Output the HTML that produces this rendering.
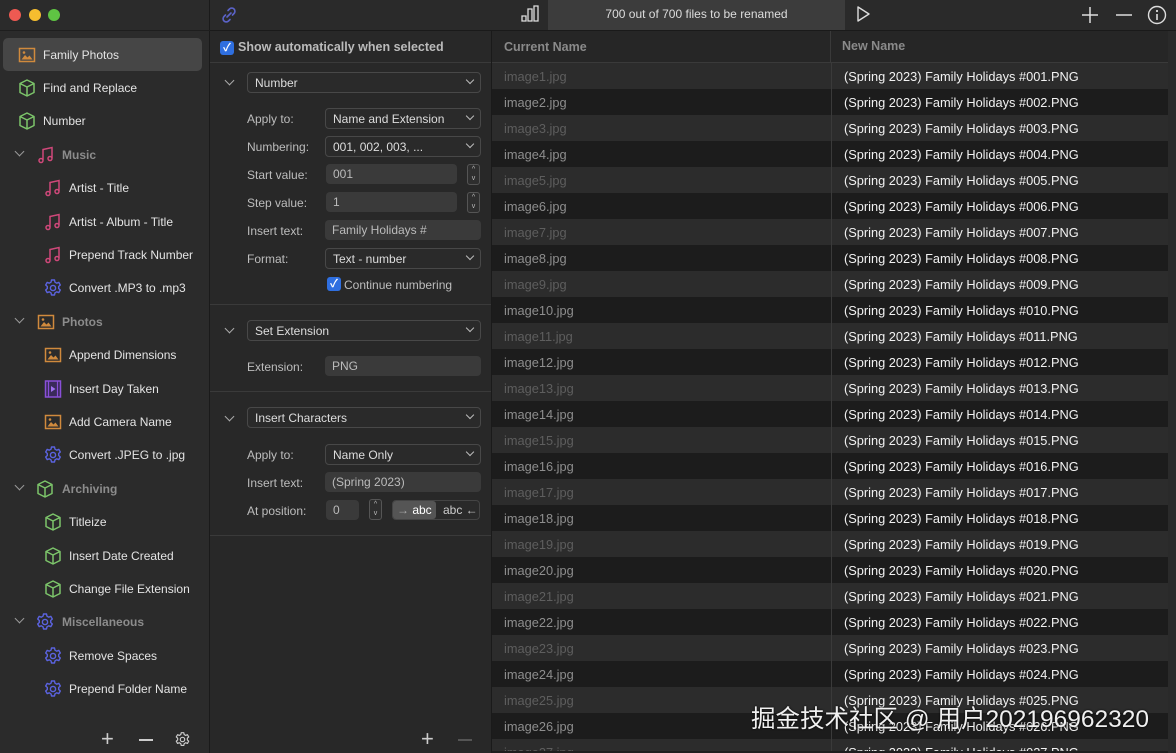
<!DOCTYPE html>
<html style="overflow:hidden;height:753px"><head><meta charset="utf-8"><style>
*{box-sizing:border-box;margin:0;padding:0}
body{width:1176px;height:753px;overflow:hidden;background:#1e1e1e;font-family:"Liberation Sans","Noto Sans CJK SC",sans-serif;font-size:12px;color:#ddd;position:relative}
.a{position:absolute}
#side{left:0;top:0;width:210px;height:753px;background:#2b2b2b;border-right:1px solid #1a1a1a}
.it{position:absolute;left:0;height:30px;width:210px;display:flex;align-items:center;font-size:12px;color:#e4e4e4}
.it svg{position:absolute}
.it span{position:absolute}
.grp span{color:#8c8c8c;font-weight:bold}
.chev{position:absolute;left:16px;width:7px;height:7px;border-right:1.5px solid #999;border-bottom:1.5px solid #999;transform:rotate(45deg);top:8px}
#mid{left:210px;top:0;width:282px;height:753px;background:#282828;border-right:1px solid #1a1a1a}
#top{left:210px;top:0;width:966px;height:31px;background:#2a2a2a;border-bottom:1px solid #1a1a1a}
.lbl{position:absolute;color:#bdbdbd;font-size:12px}
.fld{position:absolute;background:#3a3a3a;border-radius:4px;color:#bbb;font-size:12px;padding:3px 7px;height:20px}
.pop{position:absolute;background:#2a2a2a;border:1px solid #484848;border-radius:4px;color:#ddd;font-size:12px;padding:3px 7px;height:21px}
.pop:after{content:"";position:absolute;right:7px;top:4px;width:5px;height:5px;border-right:1.3px solid #bbb;border-bottom:1.3px solid #bbb;transform:rotate(45deg)}
.stp{position:absolute;width:13px;height:21px;border:1px solid #555;border-radius:3px;background:#2e2e2e;font-size:7px;color:#bbb;text-align:center;line-height:9px}
.sec{position:absolute;left:210px;width:281px;border-top:1px solid #3a3a3a}
.cb{position:absolute;width:14px;height:14px;background:#2f6fe0;border-radius:3px;color:#fff;font-size:11px;line-height:14px;text-align:center;font-weight:bold}
.schev{position:absolute;left:226px;width:7px;height:7px;border-right:1.5px solid #aaa;border-bottom:1.5px solid #aaa;transform:rotate(45deg)}
.row{position:absolute;left:492px;width:676px;height:26px;font-size:12.8px}
.row .c{position:absolute;left:12px;top:6px}
.row .n{position:absolute;left:339px;top:0;height:26px;width:337px;padding:6px 12px;color:#f2f2f2;border-left:1px solid #3a3a3a}
</style></head><body>
<div id="side" class="a"></div>
<div class="a" style="left:9px;top:9px;width:12px;height:12px;border-radius:6px;background:#ee5a52"></div>
<div class="a" style="left:29px;top:9px;width:12px;height:12px;border-radius:6px;background:#f5bd2f"></div>
<div class="a" style="left:48px;top:9px;width:12px;height:12px;border-radius:6px;background:#5fc443"></div>
<div class="a" style="left:0;top:30px;width:210px;height:1px;background:#1e1e1e"></div>
<div class="a" style="left:3px;top:38px;width:199px;height:33px;background:#464646;border-radius:5px"></div>

<svg width="0" height="0" style="position:absolute"><defs>
<symbol id="cube" viewBox="0 0 20 20"><path d="M10 2L17 5.5V14.5L10 18L3 14.5V5.5Z M3 5.5L10 9L17 5.5 M10 9V18" fill="none" stroke="#7cc46a" stroke-width="1.5" stroke-linejoin="round"/></symbol>
<symbol id="pho" viewBox="0 0 20 20"><rect x="2.5" y="3.5" width="15" height="13" fill="none" stroke="#d08a3d" stroke-width="1.5"/><path d="M4.5 14.5L8 10L10.5 12.5L12.5 10.5L15.5 14.5Z" fill="#d08a3d"/><circle cx="7" cy="7.5" r="1.3" fill="#d08a3d"/></symbol>
<symbol id="mus" viewBox="0 0 20 20"><path d="M7 15V4.5L16 2.5V13" fill="none" stroke="#d0487a" stroke-width="1.5"/><circle cx="5" cy="15.5" r="2" fill="none" stroke="#d0487a" stroke-width="1.5"/><circle cx="14" cy="13.5" r="2" fill="none" stroke="#d0487a" stroke-width="1.5"/></symbol>
<symbol id="gear" viewBox="0 0 20 20"><circle cx="10" cy="10" r="2.6" fill="none" stroke="#5b63e0" stroke-width="1.4"/><path d="M8.5 2h3l.5 2.2 1.7 1 2.1-.8 1.5 2.6-1.6 1.5v2l1.6 1.5-1.5 2.6-2.1-.8-1.7 1-.5 2.2h-3l-.5-2.2-1.7-1-2.1.8-1.5-2.6 1.6-1.5v-2L2.7 7l1.5-2.6 2.1.8 1.7-1z" fill="none" stroke="#5b63e0" stroke-width="1.4" stroke-linejoin="round"/></symbol>
<symbol id="gearw" viewBox="0 0 20 20"><circle cx="10" cy="10" r="2.6" fill="none" stroke="#ccc" stroke-width="1.4"/><path d="M8.5 2h3l.5 2.2 1.7 1 2.1-.8 1.5 2.6-1.6 1.5v2l1.6 1.5-1.5 2.6-2.1-.8-1.7 1-.5 2.2h-3l-.5-2.2-1.7-1-2.1.8-1.5-2.6 1.6-1.5v-2L2.7 7l1.5-2.6 2.1.8 1.7-1z" fill="none" stroke="#ccc" stroke-width="1.4" stroke-linejoin="round"/></symbol>
<symbol id="film" viewBox="0 0 20 20"><rect x="2.5" y="2" width="15" height="16" fill="#3a2a5a" stroke="#8a4fd8" stroke-width="1.5"/><path d="M5.5 2V18M14.5 2V18" stroke="#8a4fd8" stroke-width="1.2"/><path d="M8 7L12.5 10L8 13Z" fill="#a070f0"/></symbol>
</defs></svg>

<div class="it" style="top:40px"><svg style="left:17px;top:5px" width="20" height="20"><use href="#pho"/></svg><span style="left:43px">Family Photos</span></div>
<div class="it" style="top:73px"><svg style="left:17px;top:5px" width="20" height="20"><use href="#cube"/></svg><span style="left:43px">Find and Replace</span></div>
<div class="it" style="top:106px"><svg style="left:17px;top:5px" width="20" height="20"><use href="#cube"/></svg><span style="left:43px">Number</span></div>
<div class="it grp" style="top:140px"><i class="chev"></i><svg style="left:36px;top:5px" width="20" height="20"><use href="#mus"/></svg><span style="left:62px">Music</span></div>
<div class="it" style="top:173px"><svg style="left:43px;top:5px" width="20" height="20"><use href="#mus"/></svg><span style="left:69px">Artist - Title</span></div>
<div class="it" style="top:207px"><svg style="left:43px;top:5px" width="20" height="20"><use href="#mus"/></svg><span style="left:69px">Artist - Album - Title</span></div>
<div class="it" style="top:240px"><svg style="left:43px;top:5px" width="20" height="20"><use href="#mus"/></svg><span style="left:69px">Prepend Track Number</span></div>
<div class="it" style="top:273px"><svg style="left:43px;top:5px" width="20" height="20"><use href="#gear"/></svg><span style="left:69px">Convert .MP3 to .mp3</span></div>
<div class="it grp" style="top:307px"><i class="chev"></i><svg style="left:36px;top:5px" width="20" height="20"><use href="#pho"/></svg><span style="left:62px">Photos</span></div>
<div class="it" style="top:340px"><svg style="left:43px;top:5px" width="20" height="20"><use href="#pho"/></svg><span style="left:69px">Append Dimensions</span></div>
<div class="it" style="top:374px"><svg style="left:43px;top:5px" width="20" height="20"><use href="#film"/></svg><span style="left:69px">Insert Day Taken</span></div>
<div class="it" style="top:407px"><svg style="left:43px;top:5px" width="20" height="20"><use href="#pho"/></svg><span style="left:69px">Add Camera Name</span></div>
<div class="it" style="top:440px"><svg style="left:43px;top:5px" width="20" height="20"><use href="#gear"/></svg><span style="left:69px">Convert .JPEG to .jpg</span></div>
<div class="it grp" style="top:474px"><i class="chev"></i><svg style="left:35px;top:5px" width="20" height="20"><use href="#cube"/></svg><span style="left:62px">Archiving</span></div>
<div class="it" style="top:507px"><svg style="left:43px;top:5px" width="20" height="20"><use href="#cube"/></svg><span style="left:69px">Titleize</span></div>
<div class="it" style="top:541px"><svg style="left:43px;top:5px" width="20" height="20"><use href="#cube"/></svg><span style="left:69px">Insert Date Created</span></div>
<div class="it" style="top:574px"><svg style="left:43px;top:5px" width="20" height="20"><use href="#cube"/></svg><span style="left:69px">Change File Extension</span></div>
<div class="it grp" style="top:607px"><i class="chev"></i><svg style="left:35px;top:5px" width="20" height="20"><use href="#gear"/></svg><span style="left:62px">Miscellaneous</span></div>
<div class="it" style="top:641px"><svg style="left:43px;top:5px" width="20" height="20"><use href="#gear"/></svg><span style="left:69px">Remove Spaces</span></div>
<div class="it" style="top:674px"><svg style="left:43px;top:5px" width="20" height="20"><use href="#gear"/></svg><span style="left:69px">Prepend Folder Name</span></div>
<div class="a" style="left:101px;top:728px;font-size:22px;color:#ccc;line-height:22px">+</div>
<div class="a" style="left:139px;top:739px;width:14px;height:1.5px;background:#ccc"></div>
<svg class="a" style="left:174px;top:731px" width="17" height="17"><use href="#gearw"/></svg>

<div id="mid" class="a"></div>
<div id="top" class="a"></div>
<svg class="a" style="left:219px;top:5px" width="20" height="20" viewBox="0 0 20 20"><path d="M8 12L12 8M9 5.5l1.5-1.5a3 3 0 0 1 4.5 4.5L13.5 10M11 14.5L9.5 16A3 3 0 0 1 5 11.5L6.5 10" fill="none" stroke="#5b63c8" stroke-width="1.6" stroke-linecap="round"/></svg>
<div class="a" style="left:548px;top:0;width:297px;height:30px;background:#3c3c3c;color:#ddd;text-align:center;line-height:29px;font-size:12px">700 out of 700 files to be renamed</div>
<svg class="a" style="left:520px;top:4px" width="20" height="20" viewBox="0 0 20 20"><path d="M2 17h4v-5H2zM8 17h4V5H8zM14 17h4V2h-4z" fill="none" stroke="#ddd" stroke-width="1.3"/></svg>
<svg class="a" style="left:855px;top:5px" width="16" height="18" viewBox="0 0 16 18"><path d="M3 2L14 9L3 16Z" fill="none" stroke="#ddd" stroke-width="1.4" stroke-linejoin="round"/></svg>
<svg class="a" style="left:1081px;top:6px" width="18" height="18"><path d="M9 1V17M1 9H17" stroke="#ddd" stroke-width="1.5"/></svg>
<svg class="a" style="left:1115px;top:6px" width="18" height="18"><path d="M1 9H17" stroke="#ddd" stroke-width="1.5"/></svg>
<svg class="a" style="left:1147px;top:5px" width="20" height="20"><circle cx="10" cy="10" r="8.5" fill="none" stroke="#ddd" stroke-width="1.4"/><path d="M10 9V15" stroke="#ddd" stroke-width="1.6"/><circle cx="10" cy="6" r="1.1" fill="#ddd"/></svg>

<div class="cb" style="left:220px;top:41px">✓</div>
<div class="a" style="left:238px;top:40px;font-size:12.5px;font-weight:bold;color:#bbb">Show automatically when selected</div>
<div class="sec" style="top:62px"></div>
<i class="schev" style="top:77px"></i>
<div class="pop" style="left:247px;top:72px;width:234px">Number</div>
<div class="lbl" style="left:247px;top:112px">Apply to:</div>
<div class="pop" style="left:325px;top:108px;width:156px">Name and Extension</div>
<div class="lbl" style="left:247px;top:140px">Numbering:</div>
<div class="pop" style="left:325px;top:136px;width:156px">001, 002, 003, ...</div>
<div class="lbl" style="left:247px;top:168px">Start value:</div>
<div class="fld" style="left:326px;top:164px;width:131px">001</div>
<div class="stp" style="left:467px;top:164px">^<br>v</div>
<div class="lbl" style="left:247px;top:196px">Step value:</div>
<div class="fld" style="left:326px;top:192px;width:131px">1</div>
<div class="stp" style="left:467px;top:192px">^<br>v</div>
<div class="lbl" style="left:247px;top:224px">Insert text:</div>
<div class="fld" style="left:325px;top:220px;width:156px">Family Holidays #</div>
<div class="lbl" style="left:247px;top:252px">Format:</div>
<div class="pop" style="left:325px;top:248px;width:156px">Text - number</div>
<div class="cb" style="left:327px;top:277px">✓</div>
<div class="lbl" style="left:344px;top:278px">Continue numbering</div>
<div class="sec" style="top:304px"></div>
<i class="schev" style="top:325px"></i>
<div class="pop" style="left:247px;top:320px;width:234px">Set Extension</div>
<div class="lbl" style="left:247px;top:360px">Extension:</div>
<div class="fld" style="left:325px;top:356px;width:156px">PNG</div>
<div class="sec" style="top:391px"></div>
<i class="schev" style="top:413px"></i>
<div class="pop" style="left:247px;top:407px;width:234px">Insert Characters</div>
<div class="lbl" style="left:247px;top:448px">Apply to:</div>
<div class="pop" style="left:325px;top:444px;width:156px">Name Only</div>
<div class="lbl" style="left:247px;top:476px">Insert text:</div>
<div class="fld" style="left:325px;top:472px;width:156px">(Spring 2023)</div>
<div class="lbl" style="left:247px;top:504px">At position:</div>
<div class="fld" style="left:326px;top:500px;width:33px">0</div>
<div class="stp" style="left:369px;top:499px">^<br>v</div>
<div class="a" style="left:392px;top:500px;width:88px;height:20px;border:1px solid #444;border-radius:4px;background:#2a2a2a"></div>
<div class="a" style="left:393px;top:501px;width:43px;height:18px;background:#555;border-radius:3px;color:#fff;font-size:12px;padding:2px 4px"><span style="color:#aaa">→</span> abc</div>
<div class="a" style="left:443px;top:503px;color:#ccc;font-size:12px">abc ←</div>
<div class="sec" style="top:535px"></div>
<div class="a" style="left:421px;top:728px;font-size:22px;color:#ccc;line-height:22px">+</div>
<div class="a" style="left:458px;top:739px;width:14px;height:1.5px;background:#555"></div>

<div class="a" style="left:492px;top:31px;width:684px;height:32px;background:#262626;border-bottom:1px solid #3a3a3a"></div>
<div class="a" style="left:504px;top:40px;font-size:12.5px;font-weight:bold;color:#8a8a8a">Current Name</div>
<div class="a" style="left:830px;top:31px;width:1px;height:32px;background:#3a3a3a"></div>
<div class="a" style="left:842px;top:39px;font-size:12.5px;font-weight:bold;color:#8a8a8a">New Name</div>
<div class="a" style="left:1168px;top:31px;width:8px;height:722px;background:#2a2a2a"></div>
<div id="rows"></div>
<script>
var h='';
var tx=['#5e5e5e','#8e8e8e'];
for(var i=1;i<=27;i++){var y=63+(i-1)*26;var bg=i%2?'#2c2c2c':'#1c1c1c';var n=('00'+i).slice(-3);
h+='<div class="row" style="top:'+y+'px;background:'+bg+';'+(i==27?'height:12px;overflow:hidden':'')+'"><span class="c" style="color:'+tx[(i+1)%2]+'">image'+i+'.jpg</span><span class="n">(Spring 2023) Family Holidays #'+n+'.PNG</span></div>';}
document.getElementById('rows').innerHTML=h;
</script>
<div class="a" style="left:751px;top:700px;font-size:24.5px;color:#f0f0f0;white-space:nowrap;text-shadow:0 0 2px #000">掘金技术社区 @ 用户202196962320</div>
</body></html>
